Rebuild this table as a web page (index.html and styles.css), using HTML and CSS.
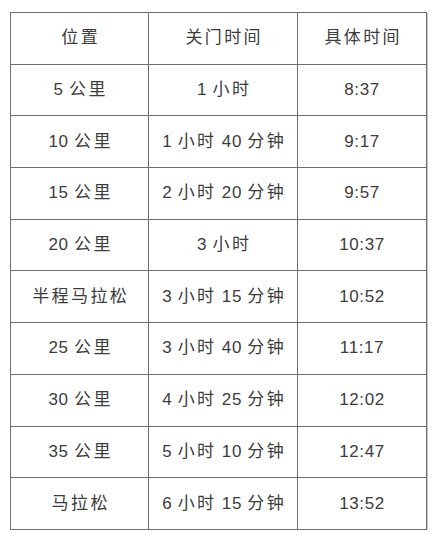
FILE: index.html
```html
<!DOCTYPE html>
<html lang="zh">
<head>
<meta charset="utf-8">
<link rel="stylesheet" href="styles.css">
</head>
<body>
<table class="cutoff">
  <colgroup>
    <col class="c1"><col class="c2"><col class="c3">
  </colgroup>
  <tr><td><span class="zh">位置</span></td><td><span class="zh">关门时间</span></td><td><span class="zh">具体时间</span></td></tr>
  <tr><td>5 <span class="zh">公里</span></td><td>1 <span class="zh">小时</span></td><td>8:37</td></tr>
  <tr><td>10 <span class="zh">公里</span></td><td>1 <span class="zh">小时</span> 40 <span class="zh">分钟</span></td><td>9:17</td></tr>
  <tr><td>15 <span class="zh">公里</span></td><td>2 <span class="zh">小时</span> 20 <span class="zh">分钟</span></td><td>9:57</td></tr>
  <tr><td>20 <span class="zh">公里</span></td><td>3 <span class="zh">小时</span></td><td>10:37</td></tr>
  <tr><td><span class="zh">半程马拉松</span></td><td>3 <span class="zh">小时</span> 15 <span class="zh">分钟</span></td><td>10:52</td></tr>
  <tr><td>25 <span class="zh">公里</span></td><td>3 <span class="zh">小时</span> 40 <span class="zh">分钟</span></td><td>11:17</td></tr>
  <tr><td>30 <span class="zh">公里</span></td><td>4 <span class="zh">小时</span> 25 <span class="zh">分钟</span></td><td>12:02</td></tr>
  <tr><td>35 <span class="zh">公里</span></td><td>5 <span class="zh">小时</span> 10 <span class="zh">分钟</span></td><td>12:47</td></tr>
  <tr><td><span class="zh">马拉松</span></td><td>6 <span class="zh">小时</span> 15 <span class="zh">分钟</span></td><td>13:52</td></tr>
</table>
</body>
</html>
```
FILE: styles.css
```css
html, body {
  margin: 0;
  background: #ffffff;
}
body {
  padding: 12px 0 0 10px;
  font-family: "Liberation Sans", "Noto Sans CJK SC", sans-serif;
  font-size: 17px;
  color: #3c3c3c;
}
.cutoff {
  border-collapse: collapse;
  table-layout: fixed;
  width: 416px;
  border: 1px solid #6e6e6e;
  box-shadow: 1px 1px 0 #c8c8c8;
}
.c1 { width: 138px; }
.c2 { width: 149px; }
.c3 { width: 129px; }
.cutoff td {
  border: 1px solid #6e6e6e;
  height: 50.7px;
  padding: 0;
  text-align: center;
  vertical-align: middle;
  letter-spacing: 0.6px;
  line-height: 20px;
}
.zh {
  letter-spacing: 2.4px;
}
.zh:last-child {
  margin-right: -2.4px;
}
```
